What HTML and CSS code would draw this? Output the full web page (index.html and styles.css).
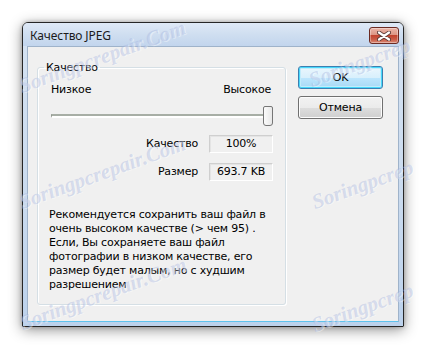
FILE: index.html
```html
<!DOCTYPE html>
<html lang="ru">
<head>
<meta charset="utf-8">
<title>Качество JPEG</title>
<link rel="stylesheet" href="styles.css">
</head>
<body>
<div class="screen">
  <div class="window">
    <div class="titlebar">
      <span class="title">Качество JPEG</span>
      <button class="close" aria-label="Закрыть">
        <svg width="14" height="10" viewBox="0 0 14 10">
          <path d="M2 1.5 L12 8.5 M12 1.5 L2 8.5" stroke="#5a3a36" stroke-width="4" stroke-linecap="round"/>
          <path d="M2 1.5 L12 8.5 M12 1.5 L2 8.5" stroke="#ffffff" stroke-width="2.2" stroke-linecap="round"/>
        </svg>
      </button>
    </div>
    <div class="client">
      <fieldset class="group">
        <legend class="legend">Качество</legend>
        <div class="group-body">
          <div class="scale"><span>Низкое</span><span>Высокое</span></div>
          <div class="slider">
            <div class="track"></div>
            <div class="thumb"></div>
          </div>
          <div class="fields">
            <div class="row"><span class="lbl">Качество</span><span class="box">100%</span></div>
            <div class="row"><span class="lbl">Размер</span><span class="box">693.7 KB</span></div>
          </div>
          <p class="note">Рекомендуется сохранить ваш файл в<br>очень высоком качестве (&gt; чем 95) .<br>Если, Вы сохраняете ваш файл<br>фотографии в низком качестве, его<br>размер будет малым, но с худшим<br>разрешением</p>
        </div>
      </fieldset>
      <div class="buttons">
        <button class="btn btn-default">OK</button>
        <button class="btn">Отмена</button>
      </div>
    </div>
  </div>
  <span class="wm wm1">Soringpcrepair.Com</span>
  <span class="wm wm2">Soringpcrepair.Com</span>
  <span class="wm wm3">Soringpcrepair.Com</span>
  <span class="wm wm4">Soringpcrep</span>
  <span class="wm wm5">Soringpcrep</span>
  <span class="wm wm6">Soringpcrep</span>
</div>
</body>
</html>
```
FILE: styles.css
```css
* { box-sizing: border-box; }
html, body { margin: 0; padding: 0; background: #ffffff; }
body { width: 426px; height: 349px; overflow: hidden; font-family: "DejaVu Sans", sans-serif; }

.screen {
  position: relative;
  width: 426px;
  height: 349px;
  padding: 22px 0 0 22px;
  overflow: hidden;
}

.window {
  width: 382px;
  height: 305px;
  border: 1px solid #262626;
  border-radius: 6px 6px 1px 1px;
  background: linear-gradient(to bottom, #d6e3f2 0%, #c9daee 60%, #bcd2ec 100%);
  box-shadow: 0 3px 14px rgba(0, 0, 0, 0.42), 0 0 4px rgba(0,0,0,0.25);
  display: flex;
  flex-direction: column;
}

.titlebar {
  height: 23px;
  display: flex;
  align-items: flex-start;
  justify-content: space-between;
  padding: 0 4px 0 7px;
  background: linear-gradient(to bottom, #dfe9f6 0%, #cfdef0 50%, #c2d5ed 100%);
  border-radius: 5px 5px 0 0;
}

.title {
  font-family: "Noto Sans", "Open Sans", sans-serif;
  font-size: 12px;
  line-height: 23px;
  color: #1b1b1b;
  padding-top: 1px;
  letter-spacing: -0.1px;
}

.close {
  margin-top: 4px;
  width: 30px;
  height: 17px;
  padding: 0;
  border: 1px solid #6b2a22;
  border-radius: 3px;
  background: linear-gradient(to bottom, #eab5a8 0%, #dd9685 45%, #c2442f 50%, #c95a45 75%, #d98a75 100%);
  box-shadow: inset 0 0 0 1px rgba(255,255,255,0.35);
  display: flex;
  align-items: center;
  justify-content: center;
}

.client {
  flex: 1;
  margin: 0 4px 4px 4px;
  background: #f0f0f0;
  border: 1px solid #9fb3ca;
  border-bottom-color: #5ec3ee;
  display: flex;
  align-items: flex-start;
  padding: 13px 0 0 9px;
  gap: 12px;
}

.group {
  width: 249px;
  height: 245px;
  margin: 0;
  padding: 0;
  border: 1px solid #d5dfe5;
  border-radius: 3px;
  box-shadow: inset 1px 1px 0 #ffffff, 1px 1px 0 #ffffff;
}

.legend {
  margin-left: 6px;
  padding: 0 2px;
  font-size: 11px;
  line-height: 15px;
  letter-spacing: -0.2px;
  color: #000;
}

.group-body {
  padding: 7px 12px 0 13px;
  font-size: 11px;
  color: #000;
  letter-spacing: -0.2px;
}

.scale {
  display: flex;
  justify-content: space-between;
  line-height: 15px;
  padding-right: 2px;
}

.slider {
  margin-top: 9px;
  height: 20px;
  display: grid;
  align-items: center;
}
.track, .thumb { grid-area: 1 / 1; }
.track {
  height: 4px;
  border-top: 2px solid #a7aea5;
  border-left: 1px solid #8d948b;
  border-bottom: 2px solid #ffffff;
}
.thumb {
  justify-self: end;
  width: 10px;
  height: 20px;
  border: 1px solid #767676;
  border-radius: 2px 2px 3px 3px;
  background: linear-gradient(to right, #fbfbfb, #e8e8e8);
}

.fields {
  margin-top: 9px;
  display: flex;
  flex-direction: column;
  gap: 10px;
}
.row {
  display: flex;
  justify-content: flex-end;
  align-items: center;
  gap: 11px;
}
.lbl { line-height: 18px; }
.box {
  width: 64px;
  height: 18px;
  line-height: 16px;
  text-align: center;
  border: 1px solid;
  border-color: #cfcfcf #ffffff #ffffff #cfcfcf;
  box-shadow: 1px 1px 0 #e4e4e4 inset;
}

.note {
  margin: 27px 0 0 -2px;
  line-height: 14px;
  white-space: nowrap;
}

.buttons {
  margin-top: 6px;
  display: flex;
  flex-direction: column;
  gap: 7px;
}
.btn {
  width: 85px;
  height: 23px;
  padding: 0;
  font-family: "DejaVu Sans", sans-serif;
  font-size: 11px;
  letter-spacing: -0.2px;
  color: #000;
  border: 1px solid #707070;
  border-radius: 3px;
  background: linear-gradient(to bottom, #f2f2f2 0%, #ebebeb 50%, #dddddd 51%, #cfcfcf 100%);
  box-shadow: inset 0 0 0 1px #fcfcfc;
}
.btn-default {
  border-color: #3c7fb1;
  background: linear-gradient(to bottom, #eaf6fd 0%, #d9f0fc 50%, #bee6fd 51%, #a7d9f5 100%);
  box-shadow: inset 0 0 0 1px #48d8fb, inset 0 0 0 2px #c2ecfb;
}

.wm {
  position: absolute;
  font-family: "Liberation Serif", serif;
  font-style: italic;
  font-weight: bold;
  font-size: 21px;
  line-height: 20px;
  color: rgba(165, 180, 222, 0.4);
  text-shadow: 1px 1px 0 rgba(255,255,255,0.4);
  transform: rotate(-20deg);
  transform-origin: left bottom;
  white-space: nowrap;
  pointer-events: none;
}
.wm1 { left: 23px; top: 76px; }
.wm2 { left: 23px; top: 192px; }
.wm3 { left: 24px; top: 313px; }
.wm4 { left: 313px; top: 70px; }
.wm5 { left: 316px; top: 192px; }
.wm6 { left: 316px; top: 315px; }
```
